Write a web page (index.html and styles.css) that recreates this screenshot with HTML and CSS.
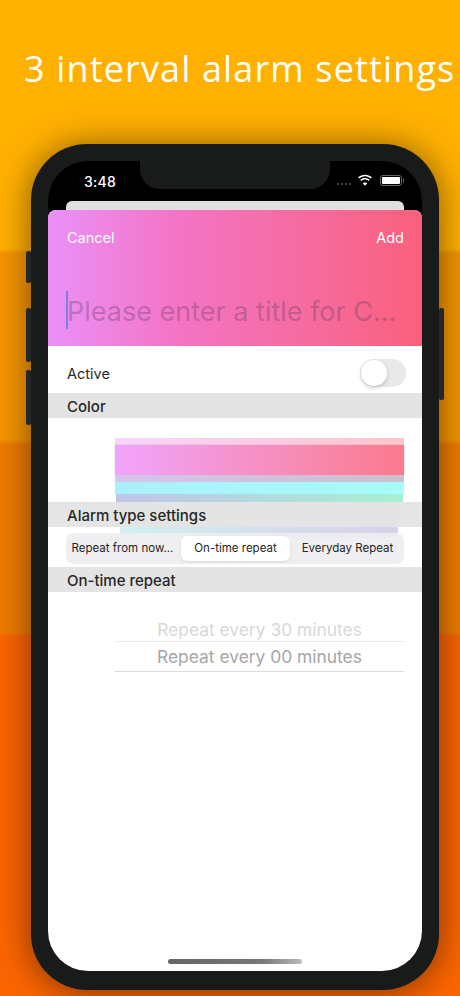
FILE: index.html
```html
<!DOCTYPE html>
<html lang="en">
<head>
<meta charset="utf-8">
<title>3 interval alarm settings</title>
<link rel="stylesheet" href="styles.css">
</head>
<body>
<h1 class="headline">3 interval alarm settings</h1>
<div class="phone">
  <span class="btn btn-mute"></span>
  <span class="btn btn-up"></span>
  <span class="btn btn-down"></span>
  <span class="btn btn-power"></span>
  <div class="screen">
    <div class="status">
      <span class="time">3:48</span>
      <div class="notch"></div>
      <div class="indicators">
        <span class="signal"><i></i><i></i><i></i><i></i></span>
        <svg class="wifi" width="16" height="12" viewBox="0 0 16 12"><path d="M8 2.2c2.3 0 4.3.9 5.9 2.4l1-1.1C13.1 1.8 10.700.8 8 .8S2.900 1.800 1.100 3.500l1 1.100C3.700 3.100 5.700 2.200 8 2.200z M8 5.400c1.400 0 2.700.5 3.700 1.500l1-1.100C11.400 4.500 9.800 3.900 8 3.900s-3.400.6-4.700 1.900l1 1.100c1-1 2.300-1.500 3.700-1.500z M8 8.400c-.9 0-1.700.3-2.300.9L8 11.700l2.300-2.400c-.6-.6-1.400-.9-2.300-.9z" fill="#fff"/></svg>
        <span class="battery"><b></b></span>
      </div>
    </div>
    <div class="back-card"></div>
    <div class="sheet">
      <div class="sheet-head">
        <div class="nav"><span>Cancel</span><span>Add</span></div>
        <div class="title-input"><span class="caret"></span><span class="placeholder">Please enter a title for C...</span></div>
      </div>
      <div class="row-active">
        <span class="row-label">Active</span>
        <span class="switch"><span class="knob"></span></span>
      </div>
      <div class="section">Color</div>
      <div class="color-picker">
        <div class="strip s-pale"></div>
        <div class="strip s-main"></div>
        <div class="strip s-mid"></div>
        <div class="strip s-cyan"></div>
        <div class="strip s-green"></div>
        <div class="strip s-fade"></div>
      </div>
      <div class="section section-over">Alarm type settings</div>
      <div class="segments">
        <span class="seg seg-first">Repeat from now...</span>
        <span class="seg seg-on">On-time repeat</span>
        <span class="seg seg-last">Everyday Repeat</span>
      </div>
      <div class="section">On-time repeat</div>
      <div class="wheel">
        <div class="wheel-row wheel-far">Repeat every 30 minutes</div>
        <div class="wheel-row wheel-near">Repeat every 00 minutes</div>
      </div>
      <div class="home-bar"></div>
    </div>
  </div>
</div>
</body>
</html>
```
FILE: styles.css
```css
* { box-sizing: border-box; }
html, body { margin: 0; height: 100%; }
body {
  width: 460px;
  height: 996px;
  overflow: hidden;
  font-family: Inter, "Liberation Sans", sans-serif;
  background: linear-gradient(180deg, #ffb000 0, #ffb000 249px, #f49500 253px, #f49500 440px, #ee7c00 444px, #ee7c00 632px, #fb6500 636px, #fb6500 100%);
  display: flex;
  flex-direction: column;
}
.headline {
  margin: 0;
  height: 144px;
  flex: none;
  padding: 44px 0 0 24px;
  color: #fff;
  font-family: "Open Sans", sans-serif;
  font-size: 36px;
  font-weight: 400;
  line-height: 50px;
  letter-spacing: 1.15px;
  white-space: nowrap;
}
.phone {
  position: relative;
  flex: none;
  width: 408px;
  height: 846px;
  margin-left: 31px;
  padding: 17px;
  background: #191b1b;
  border-radius: 56px;
  box-shadow: 0 2px 34px rgba(0, 0, 0, .5);
}
.btn { position: absolute; background: #24272a; border-radius: 2px; width: 5px; }
.btn-mute { left: -5px; top: 107px; height: 32px; }
.btn-up { left: -5px; top: 164px; height: 54px; }
.btn-down { left: -5px; top: 226px; height: 55px; }
.btn-power { right: -5px; top: 164px; height: 92px; }
.screen {
  height: 810px;
  width: 374px;
  background: #000;
  border-radius: 40px;
  overflow: hidden;
  display: flex;
  flex-direction: column;
}
.status {
  position: relative;
  flex: none;
  height: 40px;
  display: flex;
  justify-content: space-between;
  align-items: flex-start;
  padding: 11px 20px 0 36px;
  color: #fff;
}
.time { font-size: 14px; font-weight: 500; line-height: 20px; letter-spacing: .3px; }
.notch {
  position: absolute;
  left: 92px;
  top: 0;
  width: 190px;
  height: 28px;
  background: #191b1b;
  border-radius: 0 0 20px 20px;
}
.indicators { display: flex; align-items: center; gap: 4px; height: 20px; margin-top: -2px; }
.signal { display: flex; gap: 2px; margin-top: 7px; }
.signal i { width: 2px; height: 2px; border-radius: 50%; background: #555; }
.wifi { margin: 0 3px 0 2px; }
.battery {
  position: relative;
  width: 22px;
  height: 11px;
  border: 1px solid #666;
  border-radius: 3px;
  padding: 1px;
  display: block;
}
.battery::after {
  content: "";
  position: absolute;
  right: -3px;
  top: 2px;
  width: 1px;
  height: 5px;
  background: #666;
  border-radius: 0 1px 1px 0;
}
.battery b { display: block; height: 100%; background: #fff; border-radius: 1px; }
.back-card {
  flex: none;
  height: 9px;
  margin: 0 18px;
  background: #e0e0e0;
  border-radius: 6px 6px 0 0;
}
.sheet {
  flex: 1;
  display: flex;
  flex-direction: column;
  background: #fff;
  border-radius: 8px 8px 0 0;
  overflow: hidden;
  position: relative;
}
.sheet-head {
  flex: none;
  height: 136px;
  background: linear-gradient(90deg, #ea90f8 0, #f474c4 35%, #f66b9e 70%, #f9607c 100%);
  color: #fff;
}
.nav {
  display: flex;
  justify-content: space-between;
  padding: 18px 18px 0 19px;
  font-size: 14.5px;
  line-height: 20px;
}
.title-input {
  display: flex;
  align-items: center;
  margin: 43px 0 0 18px;
  height: 38px;
  white-space: nowrap;
}
.caret { width: 2px; height: 38px; background: #7a7fe6; flex: none; margin-right: -1px; }
.placeholder { font-size: 27px; color: rgba(100, 60, 100, .36); line-height: 38px; margin-top: 3px; }
.row-active {
  flex: none;
  height: 47px;
  padding: 6px 16px 0 19px;
  display: flex;
  align-items: center;
  justify-content: space-between;
  font-size: 14.5px;
  color: #2a2a2a;
}
.row-label { margin-top: 2px; }
.switch {
  width: 46px;
  height: 28px;
  background: #e9e9ea;
  border-radius: 14px;
  padding: 1px;
  display: block;
}
.knob {
  display: block;
  width: 26px;
  height: 26px;
  background: #fff;
  border-radius: 50%;
  box-shadow: 0 2px 4px rgba(0, 0, 0, .18);
}
.section {
  flex: none;
  height: 25px;
  padding-left: 19px;
  background: #e4e4e4;
  font-size: 15px;
  font-weight: 500;
  line-height: 27px;
  color: #262626;
  position: relative;
}
.section-over { background: rgba(228, 228, 228, .96); }
.color-picker {
  flex: none;
  height: 84px;
  padding: 20px 18px 0 67px;
  position: relative;
}
.strip { height: 7px; }
.s-pale { background: linear-gradient(90deg, #f8d4fb, #fbc5cb); }
.s-main { height: 30px; background: linear-gradient(90deg, #f0a4fc, #f78cb8 60%, #fb7a8c); box-shadow: 0 0 1px rgba(120, 80, 120, .5); }
.s-mid { background: linear-gradient(90deg, #d6c4ec, #ccbfcc); }
.s-cyan { height: 12px; background: linear-gradient(90deg, #aaf0fc, #a6fcf8); }
.s-green { height: 8px; margin: 0 1px; background: linear-gradient(90deg, #c0c4ea, #a6f0d2); }
.s-fade {
  height: 36px;
  margin: 0 6px 0 5px;
  border-radius: 0 0 6px 6px;
  background: linear-gradient(90deg, #d0f0ee, #d8d0e8);
}
.segments {
  flex: none;
  position: relative;
  height: 31px;
  margin: 6px 18px 3px;
  padding: 3px 2px;
  background: rgba(238, 238, 240, .92);
  border-radius: 8px;
  display: flex;
  align-items: stretch;
}
.seg {
  flex: none;
  text-align: center;
  font-size: 11.5px;
  font-weight: 400;
  line-height: 25px;
  color: #262626;
  white-space: nowrap;
}
.seg-first { width: 113px; padding-right: 4px; }
.seg-on {
  width: 109px;
  background: #fff;
  border-radius: 6px;
  box-shadow: 0 1px 3px rgba(0, 0, 0, .1);
}
.seg-last { width: 112px; padding-left: 3px; }
.wheel {
  flex: none;
  margin: 24px 18px 0 67px;
}
.wheel-row { text-align: center; font-size: 17.4px; white-space: nowrap; }
.wheel-far { height: 26px; line-height: 28px; color: #d8d8d8; border-bottom: 1px solid #e8e8e8; }
.wheel-near { height: 30px; line-height: 30px; color: #a6a6a6; border-bottom: 1px solid #dcdcdc; }
.home-bar {
  position: absolute;
  left: 120px;
  bottom: 7px;
  width: 134px;
  height: 5px;
  border-radius: 3px;
  background: linear-gradient(90deg, #666, #777 70%, #bbb);
}
```
